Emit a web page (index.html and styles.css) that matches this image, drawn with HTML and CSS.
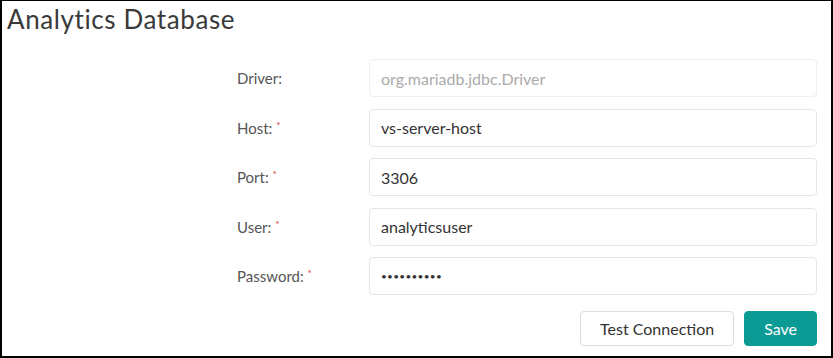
FILE: index.html
```html
<!DOCTYPE html>
<html lang="en">
<head>
    <meta charset="UTF-8">
    <title>Analytics Database</title>
    <link rel="stylesheet" href="styles.css">
</head>
<body>
    <div class="panel">
        <h1 class="titre">Analytics Database</h1>

        <form class="formulaire">
            <div class="ligne">
                <label class="label">Driver:</label>
                <input class="champ" type="text" value="org.mariadb.jdbc.Driver" disabled>
            </div>
            <div class="ligne">
                <label class="label">Host: <span class="requis">*</span></label>
                <input class="champ" type="text" value="vs-server-host">
            </div>
            <div class="ligne">
                <label class="label">Port: <span class="requis">*</span></label>
                <input class="champ" type="text" value="3306">
            </div>
            <div class="ligne">
                <label class="label">User: <span class="requis">*</span></label>
                <input class="champ" type="text" value="analyticsuser">
            </div>
            <div class="ligne">
                <label class="label">Password: <span class="requis">*</span></label>
                <input class="champ champ-mdp" type="password" value="secretpass">
            </div>

            <div class="actions">
                <button type="button" class="bouton">Test Connection</button>
                <button type="button" class="bouton bouton-save">Save</button>
            </div>
        </form>
    </div>
</body>
</html>
```

FILE: styles.css
```css
body {
    margin: 0;
    padding: 0;
    font-family: 'Lato', 'Open Sans', sans-serif;
    color: #333;
}
.panel {
    box-sizing: border-box;
    width: 833px;
    height: 358px;
    border: 2px solid #000;
    border-top-width: 1px;
    padding: 0 14px 0 5px;
}
.titre {
    margin: 0;
    padding-top: 3px;
    font-size: 26px;
    font-weight: 400;
    letter-spacing: 0.6px;
    line-height: 30px;
    color: #3a3a3a;
}
.formulaire {
    display: flex;
    flex-direction: column;
    gap: 11.5px;
    margin-top: 25px;
    padding-left: 230px;
}
.ligne {
    display: flex;
    align-items: center;
}
.label {
    width: 132px;
    font-size: 15px;
    color: #555;
}
.requis {
    color: #e0383b;
    font-size: 10px;
    vertical-align: 5px;
}
.champ {
    box-sizing: border-box;
    width: 448px;
    height: 38px;
    padding: 0 11px;
    border: 1px solid #e8e6e3;
    border-radius: 4px;
    background: #fff;
    font-family: inherit;
    font-size: 16px;
    color: #333;
}
.champ:disabled {
    color: #aaa;
    background: #fff;
    border-color: #f0efed;
}
.champ-mdp {
    font-size: 10px;
    letter-spacing: 0.3px;
}
.actions {
    display: flex;
    justify-content: flex-end;
    gap: 10px;
    margin-top: 4px;
}
.bouton {
    height: 35px;
    padding: 0 19px;
    border: 1px solid #e0ddd8;
    border-radius: 4px;
    background: #fff;
    font-family: inherit;
    font-size: 16px;
    color: #333;
}
.bouton-save {
    padding: 0 19px;
    border-color: #0c9a94;
    background: #0c9a94;
    color: #fff;
}
```
